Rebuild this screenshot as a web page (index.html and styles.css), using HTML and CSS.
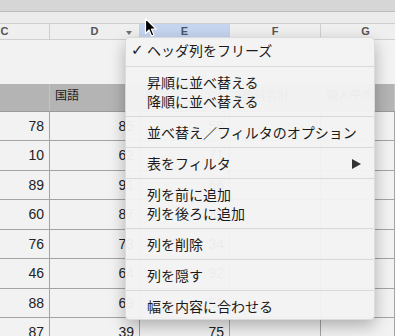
FILE: index.html
```html
<!DOCTYPE html>
<html>
<head>
<meta charset="utf-8">
<title>表</title>
<link rel="stylesheet" href="styles.css">
</head>
<body>
<div class="window">
    <div class="toolbar"></div>
    <div class="strip"></div>

    <div class="colHeads">
        <div class="colHead">C</div>
        <div class="colHead">D<span class="colArrow"></span></div>
        <div class="colHead selected">E</div>
        <div class="colHead">F</div>
        <div class="colHead">G</div>
    </div>

    <div class="sheet">
        <div class="table">
            <div class="row headRow">
                <div class="cell"></div>
                <div class="cell">国語</div>
                <div class="cell">数学</div>
                <div class="cell">3教科合計</div>
                <div class="cell">個人平均</div>
            </div>
            <div class="row"><div class="cell">78</div><div class="cell">85</div><div class="cell">58</div><div class="cell"></div><div class="cell"></div></div>
            <div class="row"><div class="cell">10</div><div class="cell">62</div><div class="cell">71</div><div class="cell"></div><div class="cell"></div></div>
            <div class="row"><div class="cell">89</div><div class="cell">91</div><div class="cell">66</div><div class="cell"></div><div class="cell"></div></div>
            <div class="row"><div class="cell">60</div><div class="cell">87</div><div class="cell">80</div><div class="cell"></div><div class="cell"></div></div>
            <div class="row"><div class="cell">76</div><div class="cell">73</div><div class="cell">34</div><div class="cell"></div><div class="cell"></div></div>
            <div class="row"><div class="cell">46</div><div class="cell">64</div><div class="cell">92</div><div class="cell"></div><div class="cell"></div></div>
            <div class="row"><div class="cell">88</div><div class="cell">69</div><div class="cell">51</div><div class="cell"></div><div class="cell"></div></div>
            <div class="row"><div class="cell">87</div><div class="cell">39</div><div class="cell">75</div><div class="cell"></div><div class="cell"></div></div>
        </div>
    </div>
</div>

<div class="menu">
    <div class="group first">
        <div class="item"><span class="check">✓</span>ヘッダ列をフリーズ</div>
    </div>
    <div class="group">
        <div class="item">昇順に並べ替える</div>
        <div class="item">降順に並べ替える</div>
    </div>
    <div class="group">
        <div class="item">並べ替え／フィルタのオプション</div>
    </div>
    <div class="group">
        <div class="item">表をフィルタ<span class="sub"></span></div>
    </div>
    <div class="group">
        <div class="item">列を前に追加</div>
        <div class="item">列を後ろに追加</div>
    </div>
    <div class="group">
        <div class="item">列を削除</div>
    </div>
    <div class="group">
        <div class="item">列を隠す</div>
    </div>
    <div class="group last">
        <div class="item">幅を内容に合わせる</div>
    </div>
</div>

<svg class="cursor" width="14" height="21" viewBox="0 0 14 21">
    <path d="M1.5 1.5 L1.5 16.5 L5 13 L7.6 19 L10 18 L7.5 12.2 L12.3 12.2 Z" fill="#000" stroke="#fff" stroke-width="1.2" stroke-linejoin="round"/>
</svg>
</body>
</html>
```

FILE: styles.css
```css
body {
	margin: 0;
	width: 395px;
	height: 336px;
	overflow: hidden;
	background-color: #f2f2f2;
	font-family: "Liberation Sans", Arial, sans-serif;
	position: relative;
}

.window {
	width: 395px;
	height: 336px;
	overflow: hidden;
}

.toolbar {
	height: 11px;
	background-color: #d6d6d6;
	border-bottom: 1px solid #bcbcbc;
}

.strip {
	height: 11px;
	background-color: #ececec;
}

/* column letters */
.colHeads {
	display: grid;
	grid-template-columns: 90px 90px 90px 91px 90px;
	margin-left: -40px;
	height: 15px;
	border-top: 1px solid #cfcfcf;
	border-bottom: 1px solid #cfcfcf;
	background-color: #efefef;
}

.colHead {
	position: relative;
	border-right: 1px solid #cfcfcf;
	text-align: center;
	font-size: 11px;
	font-weight: bold;
	line-height: 15px;
	color: #555555;
}

.colHead.selected {
	background-color: #c5d4ef;
	color: #48556e;
}

.colArrow {
	position: absolute;
	right: 7px;
	top: 7px;
	border-left: 3px solid transparent;
	border-right: 3px solid transparent;
	border-top: 4px solid #707070;
}

/* table */
.sheet {
	padding-top: 44px;
}

.table {
	margin-left: -40px;
	width: 435px;
}

.row {
	display: grid;
	grid-template-columns: 90px 90px 90px 91px 1fr;
	height: 29.43px;
	box-sizing: border-box;
	border-bottom: 1px solid #a3a3a3;
}

.cell {
	border-right: 1px solid #a3a3a3;
	text-align: right;
	padding-right: 5px;
	font-size: 14px;
	line-height: 28px;
	color: #222222;
}

.headRow {
	height: 28px;
	background-color: #b4b4b4;
	border-bottom: 1px solid #9a9a9a;
}

.headRow .cell {
	border-right: 1px solid #c4c4c4;
	text-align: left;
	padding-left: 5px;
	font-family: "Noto Sans CJK JP", sans-serif;
	font-size: 12px;
	line-height: 22px;
	color: #1a1a1a;
}

/* context menu */
.menu {
	position: absolute;
	left: 125px;
	top: 37px;
	width: 250px;
	background-color: rgba(243, 243, 243, 0.97);
	border: 1px solid rgba(0, 0, 0, 0.1);
	box-sizing: border-box;
	border-radius: 5px;
	box-shadow: 0 6px 16px rgba(0, 0, 0, 0.28);
	font-family: "Noto Sans CJK JP", sans-serif;
	font-size: 14px;
	color: #1b1b1b;
}

.group {
	padding: 6px 0 5px 0;
	border-bottom: 1px solid #d9d9d9;
}

.group.first {
	padding-top: 3px;
	padding-bottom: 6px;
}

.group.last {
	border-bottom: none;
	padding-bottom: 3px;
}

.item {
	position: relative;
	height: 19px;
	line-height: 19px;
	padding-left: 21px;
}

.check {
	position: absolute;
	left: 5px;
	top: 0;
	font-family: "DejaVu Sans", sans-serif;
	font-size: 15px;
	font-weight: bold;
	color: #222222;
}

.sub {
	position: absolute;
	right: 13px;
	top: 5px;
	border-top: 5px solid transparent;
	border-bottom: 5px solid transparent;
	border-left: 9px solid #333333;
}

.cursor {
	position: absolute;
	left: 144px;
	top: 17px;
}
```
